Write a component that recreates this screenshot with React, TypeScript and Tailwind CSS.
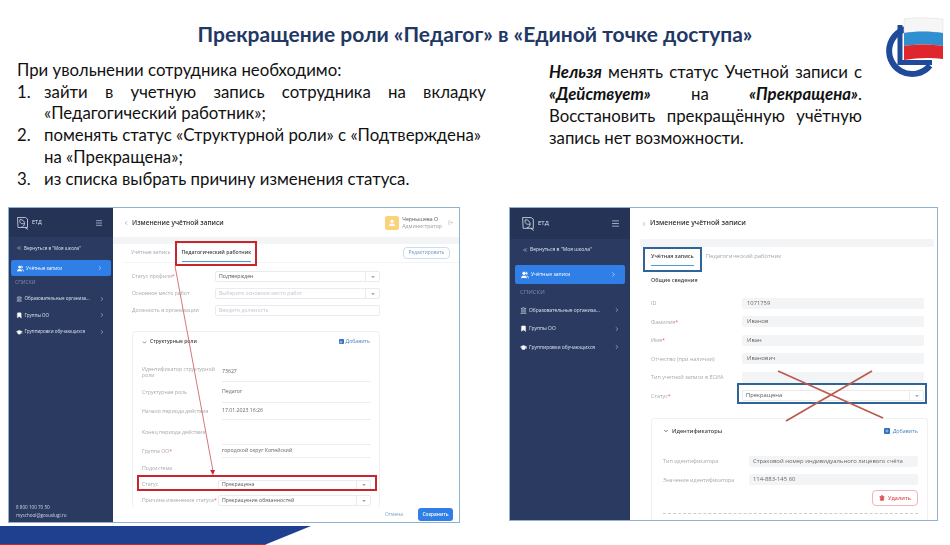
import { Bookmark, ChevronDown, ChevronLeft, ChevronRight, ChevronsLeft, GraduationCap, Landmark, LogOut, Menu, Plus, Trash2, User, Users } from "lucide-react";

const navItems = [
  { label: "Образовательные организа...", icon: Landmark },
  { label: "Группы ОО", icon: Bookmark },
  { label: "Группировки обучающихся", icon: GraduationCap },
];

function EtdLogo({ size }: { size: number }) {
  return (
    <svg width={size} height={size} viewBox="0 0 14 14" fill="none" stroke="#d5dbe8" strokeWidth="0.8">
      <path d="M1.5 1.5h8l2 1.5v8.5h-9.5z" />
      <path d="M4 3.5c3 0 4.500 2 4.500 4s-1.500 3.500-3 3.500M4 3.500c-1 3 1 5 4.500 4" />
      <path d="M9 11.500l3 2" />
    </svg>
  );
}

function Sidebar({ large }: { large?: boolean }) {
  return (
    <div className={`flex flex-col shrink-0 bg-[#2a3a60] text-[#dfe5f0] ${large ? "w-[120px]" : "w-[104px]"}`}>
      <div className={`flex items-center justify-between bg-[#253357] ${large ? "h-[31px] pl-[11px] pr-[10px]" : "h-[29px] pl-[7px] pr-[10px]"}`}>
        <div className="flex items-center gap-[2px]">
          <EtdLogo size={large ? 15 : 14} />
          <span className={large ? "text-[6px]" : "text-[5.500px]"}>ЕТД</span>
        </div>
        <Menu size={large ? 9 : 8} color="#aab3c6" strokeWidth={2.500} />
      </div>
      <div className={`flex items-center gap-[2px] ${large ? "h-[22px] pl-[12px] text-[5px]" : "h-[22px] pl-[7px] text-[4.600px]"}`}>
        <ChevronsLeft size={6} />
        <span>Вернуться в "Моя школа"</span>
      </div>
      <div className={`flex items-center justify-between rounded-[2px] bg-[#2f7fe6] text-white ${large ? "mx-[5px] mt-[4px] h-[19px] pl-[6px] pr-[8px] text-[5px]" : "mx-[2px] mt-[1px] h-[16px] pl-[6px] pr-[8px] text-[4.600px]"}`}>
        <span className="flex items-center gap-[2px]">
          <Users size={large ? 8 : 7} fill="white" />
          Учётные записи
        </span>
        <ChevronRight size={large ? 7 : 6} />
      </div>
      <div className={`text-[#7f8cab] ${large ? "mt-[4px] pl-[10px] text-[6px]" : "mt-[3px] pl-[6px] text-[5px]"}`}>СПИСКИ</div>
      <div className={`flex flex-col ${large ? "mt-[4px] pl-[10px] pr-[10px]" : "mt-[4px] pl-[7px] pr-[8px]"}`}>
        {navItems.map((item) => (
          <div key={item.label} className={`flex items-center justify-between ${large ? "h-[18.500px] text-[4.900px]" : "h-[16.500px] text-[4.500px]"}`}>
            <span className="flex items-center gap-[2px] whitespace-nowrap">
              <item.icon size={large ? 7 : 6.500} fill={item.icon === Landmark ? "none" : "white"} />
              {item.label}
            </span>
            <ChevronRight size={6} className="shrink-0" />
          </div>
        ))}
      </div>
      {!large && (
        <div className="mt-auto pb-[3px] pl-[7px] text-[4.600px] leading-[8px] text-[#cfd6e4]">
          <div>8 800 100 70 50</div>
          <div>myschool@gosuslugi.ru</div>
        </div>
      )}
    </div>
  );
}

function SelectField({ value, muted, className = "" }: { value: string; muted?: boolean; className?: string }) {
  return (
    <div className={`flex items-center justify-between rounded-[2px] border border-[#e8ebf0] pl-[3px] ${muted ? "text-[#c2c6ce]" : "text-[#555]"} ${className}`}>
      <span>{value}</span>
      <span className="flex h-full w-[14px] items-center justify-center border-l border-[#e8ebf0] text-[#555]">
        <ChevronDown size={4} fill="#555" strokeWidth={3} />
      </span>
    </div>
  );
}

const leftRoleRows = [
  { label: "Начало периода действия", value: "17.01.2023 16:26", height: "h-[17px]" },
  { label: "Конец периода действия", value: "", height: "h-[25px]" },
  { label: "Группа ОО", value: "городской округ Копейский", height: "h-[13px]", required: true },
];

function LeftPanel() {
  return (
    <div className="relative h-[316px] w-[452px] shrink-0 border border-[#8fb2d2]">
      <div className="flex h-full w-full overflow-hidden bg-white font-['Open_Sans',sans-serif] blur-[0.4px]">
        <Sidebar />
        <div className="flex min-w-0 flex-1 flex-col">
          <div className="flex h-[29px] shrink-0 items-center justify-between pl-[10px] pr-[6px]">
            <div className="flex items-center gap-[3px] text-[6.500px] font-semibold text-[#333]">
              <ChevronLeft size={6} color="#2f7fe6" />
              Изменение учётной записи
            </div>
            <div className="flex items-center gap-[3px]">
              <div className="flex h-[14px] w-[14px] items-center justify-center rounded-[2px] bg-[#fbd27c]">
                <User size={8} color="white" fill="white" />
              </div>
              <div className="text-[5.200px] leading-[6.500px] text-[#555]">
                <div>Чернышева О</div>
                <div className="text-[#999]">Администратор</div>
              </div>
              <LogOut size={5} color="#aaa" className="ml-[3px]" />
            </div>
          </div>
          <div className="h-[7px] shrink-0 bg-[#f3f4f6]" />
          <div className="ml-[10px] flex h-[19px] shrink-0 items-center justify-between border-b border-[#f3f4f6] pl-[8px] pr-[9px] text-[5.200px]">
            <div className="flex h-full items-center gap-[11px]">
              <span className="text-[#a2a6ad]">Учётная запись</span>
              <span className="flex h-full items-center border-b border-[#4f9cd0] font-semibold text-[#444]">Педагогический работник</span>
            </div>
            <span className="flex h-[12px] w-[47px] items-center justify-center rounded-[4px] border border-[#cfdcec] text-[4.900px] text-[#6d96c8]">Редактировать</span>
          </div>
          <div className="flex min-h-0 flex-1 flex-col overflow-hidden pl-[19px] pt-[5px] text-[5.200px]">
            <div className="flex h-[17px] shrink-0 items-center text-[#a5a8ae]">
              <span className="w-[83px]">Статус профиля<span className="text-[#e66]">*</span></span>
              <SelectField value="Подтвержден" className="h-[11px] w-[165px]" />
            </div>
            <div className="flex h-[17px] shrink-0 items-center text-[#a5a8ae]">
              <span className="w-[83px]">Основное место работ</span>
              <SelectField value="Выберите основное место работ" muted className="h-[11px] w-[165px]" />
            </div>
            <div className="flex h-[17px] shrink-0 items-center text-[#a5a8ae]">
              <span className="w-[83px]">Должность в организации</span>
              <div className="flex h-[11px] w-[165px] items-center rounded-[2px] border border-[#e8ebf0] pl-[3px] text-[#c2c6ce]">Введите должность</div>
            </div>
            <div className="mt-[12px] w-[248px] shrink-0 rounded-[3px] border border-[#f0f1f4] pl-[9px] pr-[8px]">
              <div className="flex h-[20px] items-center justify-between pr-[1px]">
                <span className="flex items-center gap-[3px] text-[5px] font-semibold text-[#444]">
                  <ChevronDown size={5} strokeWidth={3} />
                  Структурные роли
                </span>
                <span className="flex items-center gap-[2px] text-[#4d83c8]">
                  <span className="flex h-[5px] w-[5px] items-center justify-center rounded-[1px] bg-[#2f6fc0]">
                    <Plus size={4} color="white" strokeWidth={3} />
                  </span>
                  Добавить
                </span>
              </div>
              <div className="mt-[10px] flex h-[20px] items-center text-[#a5a8ae]">
                <span className="w-[80px] leading-[6px]">Идентификатор структурной роли</span>
                <span className="flex h-full flex-1 items-center border-b border-[#eceef1] text-[#666]">73627</span>
              </div>
              <div className="flex h-[21px] items-center text-[#a5a8ae]">
                <span className="w-[80px]">Структурная роль</span>
                <span className="flex h-full flex-1 items-center border-b border-[#eceef1] text-[#666]">Педагог</span>
              </div>
              {leftRoleRows.map((row) => (
                <div key={row.label} className={`flex items-center text-[#a5a8ae] ${row.height}`}>
                  <span className="w-[80px]">{row.label}{row.required && <span className="text-[#e66]">*</span>}</span>
                  <span className="flex h-full flex-1 items-center border-b border-[#eceef1] text-[#666]">{row.value}</span>
                </div>
              ))}
              <div className="flex h-[21px] items-center text-[#a5a8ae]">Подсистема</div>
              <div className="flex h-[11px] items-center text-[#a5a8ae]">
                <span className="w-[76px]">Статус</span>
                <SelectField value="Прекращена" className="h-[10px] flex-1" />
              </div>
              <div className="flex h-[21px] items-center text-[#a5a8ae]">
                <span className="w-[76px]">Причина изменения статуса<span className="text-[#e66]">*</span></span>
                <SelectField value="Прекращение обязанностей" className="h-[11px] flex-1" />
              </div>
            </div>
          </div>
          <div className="flex h-[15px] shrink-0 items-center justify-end gap-[15px] bg-white pr-[6px] text-[4.800px]">
            <span className="text-[#7d9cc4]">Отмена</span>
            <span className="flex h-[13px] w-[35px] items-center justify-center rounded-[3px] bg-[#2f7fe6] font-semibold text-white">Сохранить</span>
          </div>
        </div>
      </div>
      <div className="absolute left-[166px] top-[33px] h-[25px] w-[82px] border-2 border-[#c9252c]" />
      <div className="absolute left-[128px] top-[267px] h-[16px] w-[240px] border-2 border-[#c9252c]" />
      <svg className="absolute left-0 top-0" width="452" height="316" fill="none">
        <path d="M166 58L204 263" stroke="#d0686d" strokeWidth="0.900" />
        <path d="M201 262l5 0l-2 5z" fill="#c9252c" />
      </svg>
    </div>
  );
}

const rightFields = [
  { label: "ID", value: "1071759" },
  { label: "Фамилия", value: "Иванов", required: true },
  { label: "Имя", value: "Иван", required: true },
  { label: "Отчество (при наличии)", value: "Иванович" },
  { label: "Тип учетной записи в ЕСИА", value: "" },
];

function RightPanel() {
  return (
    <div className="relative h-[314px] w-[429px] shrink-0 border border-[#8fb2d2]">
      <div className="flex h-full w-full overflow-hidden bg-white font-['Open_Sans',sans-serif] blur-[0.4px]">
        <Sidebar large />
        <div className="flex min-w-0 flex-1 flex-col">
          <div className="flex h-[31px] shrink-0 items-center gap-[3px] pl-[11px] text-[6.800px] font-semibold text-[#333]">
            <ChevronLeft size={6} color="#2f7fe6" />
            Изменение учётной записи
          </div>
          <div className="ml-[10px] mr-[3px] h-[8px] shrink-0 rounded-[2px] bg-[#f3f4f6]" />
          <div className="ml-[21px] flex h-[19px] shrink-0 items-center gap-[12px] text-[5.400px]">
            <span className="flex h-full items-center border-b border-[#4f9cd0] font-semibold text-[#444]">Учётная запись</span>
            <span className="text-[5.900px] text-[#a2a6ad]">Педагогический работник</span>
          </div>
          <div className="flex min-h-0 flex-1 flex-col overflow-hidden pl-[21px] pr-[5px] text-[5.400px]">
            <div className="flex h-[28px] shrink-0 items-center pt-[1px] font-semibold text-[#444]">Общие сведения</div>
            <div className="flex shrink-0 flex-col">
              {rightFields.map((field) => (
                <div key={field.label} className="flex h-[18.500px] items-center text-[#a5a8ae]">
                  <span className="w-[91px]">{field.label}{field.required && <span className="text-[#e66]">*</span>}</span>
                  <span className="flex h-[11px] w-[182px] items-center rounded-[2px] bg-[#f3f4f6] pl-[5px] text-[5.800px] text-[#666]">{field.value}</span>
                </div>
              ))}
              <div className="flex h-[18.500px] items-center text-[#a5a8ae]">
                <span className="w-[91px]">Статус<span className="text-[#e66]">*</span></span>
                <SelectField value="Прекращена" className="h-[11px] w-[182px] border-[#bcdcf5] text-[5.800px]" />
              </div>
            </div>
            <div className="mt-[13px] w-[277px] shrink-0 grow rounded-t-[3px] border border-b-0 border-[#f0f1f4] pl-[11px] pr-[9px]">
              <div className="flex h-[25px] items-center justify-between">
                <span className="flex items-center gap-[3px] text-[5.600px] font-semibold text-[#444]">
                  <ChevronDown size={6} strokeWidth={3} />
                  Идентификаторы
                </span>
                <span className="flex items-center gap-[3px] text-[#4d83c8]">
                  <span className="flex h-[6px] w-[6px] items-center justify-center rounded-[1px] bg-[#2f6fc0]">
                    <Plus size={4} color="white" strokeWidth={3} />
                  </span>
                  Добавить
                </span>
              </div>
              <div className="mt-[8px] flex h-[18.500px] items-center text-[#a5a8ae]">
                <span className="w-[86px]">Тип идентификатора</span>
                <span className="flex h-[11px] flex-1 items-center rounded-[2px] bg-[#f3f4f6] pl-[4px] text-[5.900px] text-[#666]">Страховой номер индивидуального лицевого счёта</span>
              </div>
              <div className="flex h-[18.500px] items-center text-[#a5a8ae]">
                <span className="w-[86px]">Значение идентификатора</span>
                <span className="flex h-[11px] flex-1 items-center rounded-[2px] bg-[#f3f4f6] pl-[4px] text-[5.900px] text-[#666]">114-883-145 60</span>
              </div>
              <div className="mt-[1px] flex justify-end">
                <span className="flex h-[16px] w-[46px] items-center justify-center gap-[3px] rounded-[4px] border border-[#f0b4b8] font-semibold text-[#e0525a]">
                  <Trash2 size={6} fill="#e0525a" />
                  Удалить
                </span>
              </div>
              <div className="mt-[7px] border-t border-dashed border-[#ccc]" />
            </div>
          </div>
        </div>
      </div>
      <div className="absolute left-[133px] top-[39px] h-[25px] w-[59px] border-2 border-[#2e6498]" />
      <div className="absolute left-[227px] top-[175px] h-[21px] w-[190px] border-2 border-[#2e6498]" />
      <svg className="absolute left-0 top-0" width="429" height="314" fill="none" stroke="#bb5a4e" strokeWidth="1.700">
        <path d="M268 163L373 210" />
        <path d="M362 163L276 213" />
      </svg>
    </div>
  );
}

function CompanyLogo() {
  return (
    <svg className="absolute left-[884px] top-[16px]" width="66" height="64" viewBox="0 0 66 64" fill="none">
      <path d="M32 12.300A23 23 0 1 0 46 49.500" stroke="#1f4a9a" strokeWidth="6" />
      <path d="M16 9V46.500H48" stroke="#1f4a9a" strokeWidth="5" />
      <path d="M20 3C32 1 46 2 59 3V17C46 15 32 15 20 17z" fill="#f6f6f6" stroke="#ddd" strokeWidth="0.500" />
      <path d="M20 17C32 15 46 15 59 17V30C46 28 32 28 20 30z" fill="#2f8fd0" />
      <path d="M20 30C32 28 46 28 59 30V43C46 41 32 42 20 44z" fill="#e0262d" />
    </svg>
  );
}

export default function App() {
  return (
    <div className="relative flex h-[545px] w-[950px] flex-col overflow-hidden bg-white font-['Lato',sans-serif] text-[#111]">
      <CompanyLogo />
      <h1 className="h-[58px] pt-[20px] text-center text-[21px] font-bold leading-[28px] text-[#1f3864]">
        Прекращение роли «Педагог» в «Единой точке доступа»
      </h1>
      <div className="flex h-[149px] items-start">
        <div className="ml-[17px] w-[469px] pt-[1px] text-[16.800px] leading-[21.700px]">
          <p>При увольнении сотрудника необходимо:</p>
          <ol>
            <li className="flex">
              <span className="w-[27px] shrink-0">1.</span>
              <span className="text-justify">зайти в учетную запись сотрудника на вкладку «Педагогический работник»;</span>
            </li>
            <li className="flex">
              <span className="w-[27px] shrink-0">2.</span>
              <span>поменять статус «Структурной роли» с «Подтверждена»<br />на «Прекращена»;</span>
            </li>
            <li className="flex">
              <span className="w-[27px] shrink-0">3.</span>
              <span>из списка выбрать причину изменения статуса.</span>
            </li>
          </ol>
        </div>
        <p className="ml-[63px] mt-[3px] w-[313px] text-justify text-[16.800px] leading-[22px]">
          <b className="italic">Нельзя</b> менять статус Учетной записи с <b className="italic">«Действует»</b> на <b className="italic">«Прекращена»</b>. Восстановить прекращённую учётную запись нет возможности.
        </p>
      </div>
      <div className="flex items-start pl-[8px]">
        <LeftPanel />
        <div className="ml-[49px]">
          <RightPanel />
        </div>
      </div>
      <div className="mt-auto h-[19px] w-[311px] bg-[#1f3f8f] [clip-path:polygon(0_0,100%_0,85%_100%,0_100%)]">
        <div className="mt-[18px] h-[1px] bg-[#c9252c]" />
      </div>
    </div>
  );
}
